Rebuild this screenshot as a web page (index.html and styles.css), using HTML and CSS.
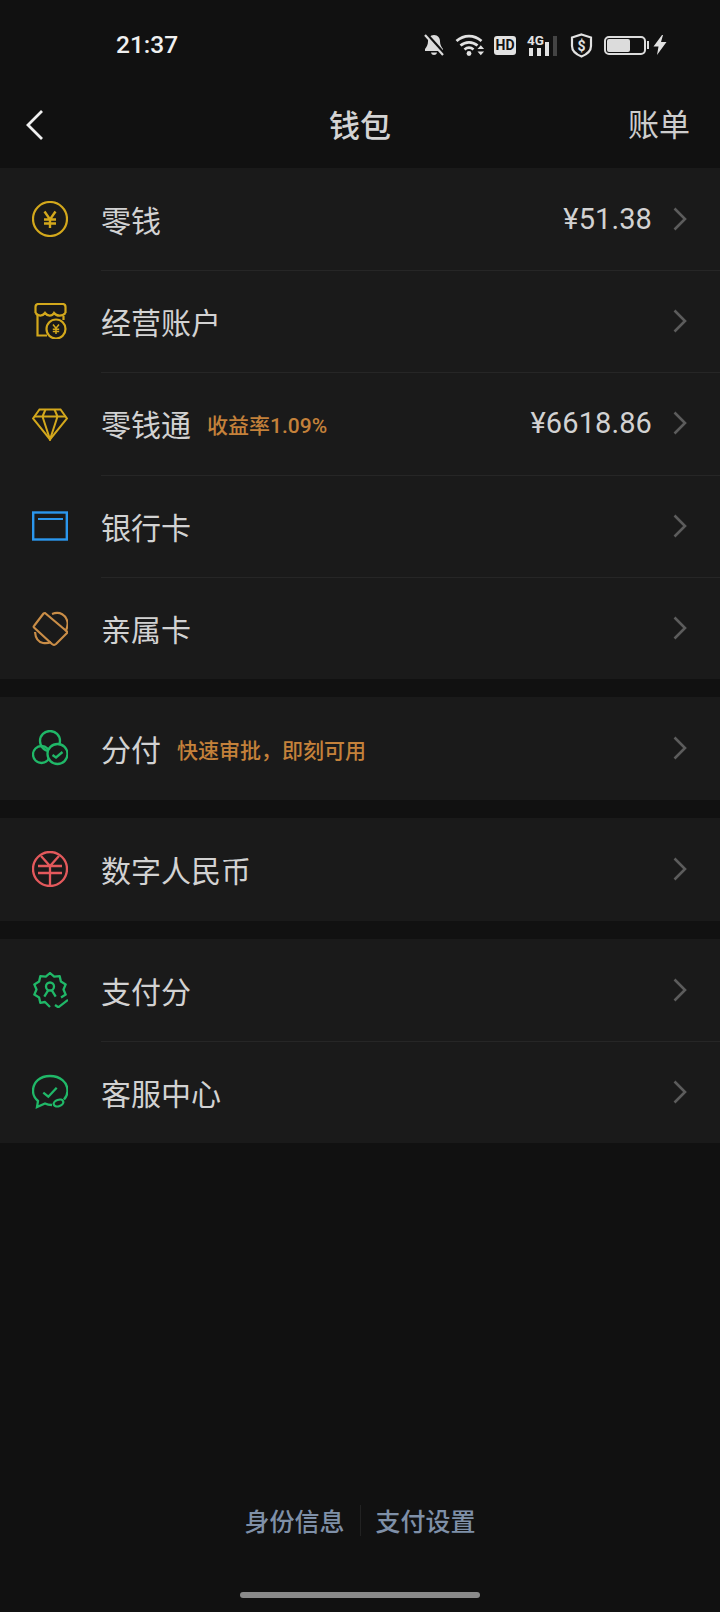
FILE: index.html
```html
<!DOCTYPE html>
<html lang="zh">
<head>
<meta charset="utf-8">
<title>钱包</title>
<link rel="stylesheet" href="styles.css">
</head>
<body>
<div class="page">
  <div class="status">
    <span class="time">21:37</span>
    <div class="status-icons">
      <svg class="si" width="20" height="22" viewBox="0 0 20 22"><path d="M10 1c-4 0-6 3-6 6.500 0 3.500-1.500 5.500-3 7.500v2h18v-2c-1.500-2-3-4-3-7.500C16 4 14 1 10 1z" fill="#dcdcdc"/><path d="M7 18.500h6c-.5 1.800-1.500 2.500-3 2.500s-2.500-.7-3-2.500z" fill="#dcdcdc"/><path d="M2.500 0l18 20" stroke="#111" stroke-width="3"/><path d="M1 1l18 20" stroke="#dcdcdc" stroke-width="2.200"/></svg>
      <svg class="si s-wifi" width="30" height="22" viewBox="0 0 30 22" fill="none" stroke="#e2e2e2" stroke-width="2.800"><path d="M1.500 7C9 .5 19 .5 26.500 7"/><path d="M5.500 11.500c5-4.300 12-4.300 17 0"/><path d="M9.500 15.500c2.800-2.300 6.200-2.300 9 0"/><circle cx="14" cy="19.500" r="2.400" fill="#e2e2e2" stroke="none"/><path d="M22.500 15l3.300-3.800 3.300 3.800zM22.500 17.500l3.300 3.800 3.300-3.800z" fill="#e2e2e2" stroke="none"/></svg>
      <span class="hd">HD</span>
      <div class="net">
        <span class="net-label">4G</span>
        <i class="bar b1"></i><i class="bar b2"></i><i class="bar b3"></i><i class="bar b4"></i>
      </div>
      <svg class="si s-shield" width="23" height="25" viewBox="0 0 23 25" fill="none"><path d="M11.500 1.500l9.500 3v8.500c0 5-4.500 8.500-9.500 10.500-5-2-9.500-5.500-9.500-10.500V4.500z" stroke="#e2e2e2" stroke-width="2.200"/><text x="11.500" y="17.500" class="shield-s">$</text></svg>
      <div class="battery"><div class="battery-fill"></div></div>
      <i class="battery-cap"></i>
      <svg class="si s-bolt" width="14" height="20" viewBox="0 0 14 20"><path d="M9 0L.5 11.500h5L4 20l9.500-13H8l2-7z" fill="#e2e2e2"/></svg>
    </div>
  </div>

  <header class="nav">
    <svg class="back" width="20" height="32" viewBox="0 0 20 32" fill="none"><path d="M17 2L3 16l14 14" stroke="#f0f0f0" stroke-width="2.800"/></svg>
    <h1 class="title">钱包</h1>
    <span class="bill">账单</span>
  </header>

  <section class="group">
    <div class="row">
      <svg class="icon" viewBox="0 0 36 36" fill="none" stroke="#d3a81c" stroke-width="2.200"><circle cx="18" cy="18" r="17"/><path d="M12.500 10.500l5.500 8 5.500-8M18 18.500V27M12 18.500h12M12 22.500h12" stroke-width="2.400"/></svg>
      <div class="row-main"><span class="label">零钱</span><span class="amount">¥51.38</span>
      <svg class="chev" viewBox="0 0 14 24" fill="none"><path d="M1.500 1.500L12 12 1.500 22.500"/></svg></div>
    </div>
    <div class="row">
      <svg class="icon" viewBox="0 0 36 36" fill="none" stroke="#d3a81c" stroke-width="2.200"><path d="M3.500 10V4Q3.500 1 6.500 1h24q3 0 3 3v6"/><path d="M3.500 10c2.500 3.500 7 3.500 9.500 0 2.500 3.500 7 3.500 9 0 2.500 3.500 8.500 3.500 11.500 0"/><path d="M5.500 11v21.500H15M31.500 13v4"/><circle cx="24" cy="26" r="9.500" fill="#1a1a1a"/><path d="M21 21.500l3 3.700 3-3.700M24 25.200V31M20.800 26.300h6.400M20.800 28.500h6.400" stroke-width="1.500"/></svg>
      <div class="row-main"><span class="label">经营账户</span>
      <svg class="chev" viewBox="0 0 14 24" fill="none"><path d="M1.500 1.500L12 12 1.500 22.500"/></svg></div>
    </div>
    <div class="row">
      <svg class="icon" viewBox="0 0 36 36" fill="none" stroke="#d3a81c" stroke-width="2"><path d="M7.500 4.500h21l6.500 9L18 34.500 1 13.500z"/><path d="M2 11.500h32M10.500 11.500L18 34.500l7.500-23M10.500 11.500l3-7M25.500 11.500l-3-7"/></svg>
      <div class="row-main"><span class="label">零钱通</span><span class="tag t1">收益率1.09%</span><span class="amount">¥6618.86</span>
      <svg class="chev" viewBox="0 0 14 24" fill="none"><path d="M1.500 1.500L12 12 1.500 22.500"/></svg></div>
    </div>
    <div class="row">
      <svg class="icon" viewBox="0 0 36 36" fill="none" stroke="#2b97ee"><rect x="1.200" y="4.500" width="33.600" height="27" stroke-width="2.400"/><path d="M6 11h25" stroke-width="2"/></svg>
      <div class="row-main"><span class="label">银行卡</span>
      <svg class="chev" viewBox="0 0 14 24" fill="none"><path d="M1.500 1.500L12 12 1.500 22.500"/></svg></div>
    </div>
    <div class="row">
      <svg class="icon" viewBox="0 0 36 36" fill="none" stroke="#c98d47" stroke-width="2.200"><path d="M13 3l22 18.500c.5 .5 .5 1 0 1.500L24 34c-1.500 1.300-2.500 1.300-4 0L2 17.500c-.5-.5-.5-1 0-1.500L11.500 3.500c.5-.5 1-.5 1.500-.5z"/><path d="M20 4c8-3 14 1 15.500 8 .5 3-.5 6.500-2 9.500M3 22c.5 6 3 10 8 11 3 .5 6 0 8-1"/></svg>
      <div class="row-main"><span class="label">亲属卡</span>
      <svg class="chev" viewBox="0 0 14 24" fill="none"><path d="M1.500 1.500L12 12 1.500 22.500"/></svg></div>
    </div>
  </section>

  <section class="group">
    <div class="row solo">
      <svg class="icon" viewBox="0 0 36 36" fill="none" stroke="#20b868" stroke-width="2.300"><circle cx="18" cy="11" r="10"/><circle cx="9.500" cy="24.500" r="8.500"/><circle cx="25.500" cy="24" r="10" fill="#1a1a1a"/><path d="M20.500 25l3.500 2.500 6.500-5.500"/></svg>
      <div class="row-main"><span class="label">分付</span><span class="tag t2">快速审批，即刻可用</span>
      <svg class="chev" viewBox="0 0 14 24" fill="none"><path d="M1.500 1.500L12 12 1.500 22.500"/></svg></div>
    </div>
  </section>

  <section class="group">
    <div class="row solo">
      <svg class="icon" viewBox="0 0 36 36" fill="none" stroke="#e3595c" stroke-width="2.300"><circle cx="18" cy="18" r="17"/><path d="M9 5L18 15 27 5M18 15V35M6 15h24M6 22h24"/></svg>
      <div class="row-main"><span class="label">数字人民币</span>
      <svg class="chev" viewBox="0 0 14 24" fill="none"><path d="M1.500 1.500L12 12 1.500 22.500"/></svg></div>
    </div>
  </section>

  <section class="group">
    <div class="row">
      <svg class="icon" viewBox="0 0 36 36" fill="none" stroke="#20b868" stroke-width="2.300" stroke-linejoin="round"><path d="M29 25.400l4.700-2.800-2.200-5.100 2.200-5.100-4.800-2.800-1.200-5.450-5.500 .55L18 1l-4.200 3.700-5.500-.55L7.100 9.600l-4.800 2.800 2.200 5.100-2.200 5.100 4.800 2.800 1.200 5.450 4.700-.85L18 35"/><circle cx="18" cy="14.500" r="4"/><path d="M12.300 24.700l4-6.500M23.700 24.700l-4-6.500M23 33l3.300 2.300 9.700-7.500"/></svg>
      <div class="row-main"><span class="label">支付分</span>
      <svg class="chev" viewBox="0 0 14 24" fill="none"><path d="M1.500 1.500L12 12 1.500 22.500"/></svg></div>
    </div>
    <div class="row">
      <svg class="icon" viewBox="0 0 36 36" fill="none" stroke="#20b868" stroke-width="2.300"><path d="M32 25.500c2.500-3 3.500-5.500 3.500-8.500C35.500 8 28 2 18 2S1 8 1 17c0 4 2 7.500 5 10l-1 6 8-3.500c2 1 4 1.500 7 1.500"/><path d="M11.300 18.700l5 4 8.400-9"/><ellipse cx="26.500" cy="29" rx="5" ry="3.200" transform="rotate(-20 26.500 29)"/></svg>
      <div class="row-main"><span class="label">客服中心</span>
      <svg class="chev" viewBox="0 0 14 24" fill="none"><path d="M1.500 1.500L12 12 1.500 22.500"/></svg></div>
    </div>
  </section>

  <footer class="foot">
    <div class="links">
      <span class="link">身份信息</span>
      <i class="divider"></i>
      <span class="link">支付设置</span>
    </div>
    <div class="home"></div>
  </footer>
</div>
</body>
</html>
```

FILE: styles.css
```css
* { box-sizing: border-box; }
html, body { margin: 0; padding: 0; background: #111; }
body { font-family: "Noto Sans CJK SC", "Noto Sans", sans-serif; color: #d2d2d2; }
.page { width: 720px; height: 1612px; display: flex; flex-direction: column; background: #111; overflow: hidden; }

.status { height: 90px; flex: none; display: flex; align-items: center; padding: 0 53px 0 116px; justify-content: space-between; }
.time { font: 500 24.500px/1 Roboto, sans-serif; color: #f0f0f0; }
.status-icons { display: flex; align-items: center; }
.si { display: block; flex: none; }
.s-wifi { margin-left: 11px; }
.hd { margin-left: 9px; width: 22px; height: 19px; border-radius: 3px; background: #e2e2e2; color: #111; font: 700 14px/19px Roboto, sans-serif; text-align: center; }
.net { position: relative; margin-left: 13px; width: 29px; height: 20px; margin-top: 1px; display: flex; align-items: flex-end; gap: 4px; }
.net-label { position: absolute; left: -2px; top: -2px; font: 700 13.500px/12px Roboto, sans-serif; color: #e2e2e2; }
.bar { display: block; width: 4px; background: #e2e2e2; }
.b1 { height: 8px; }
.b2 { height: 8px; }
.b3 { height: 14px; }
.b4 { height: 20px; background: #444; }
.s-shield { margin-left: 12px; }
.shield-s { font: 700 14px Roboto, sans-serif; fill: #e2e2e2; text-anchor: middle; }
.battery { margin-left: 11px; width: 42px; height: 19px; border: 2px solid #dcdcdc; border-radius: 5px; padding: 1px; }
.battery-fill { width: 23px; height: 100%; background: #dcdcdc; border-radius: 2px; }
.battery-cap { display: block; width: 2px; height: 8px; margin-left: 1px; background: #dcdcdc; }
.s-bolt { margin-left: 4px; }

.nav { height: 78px; flex: none; display: flex; align-items: center; justify-content: space-between; padding: 0 30px 8px 25px; position: relative; }
.back { display: block; }
.title { position: absolute; left: 0; right: 0; top: 18px; margin: 0; text-align: center; font-size: 31px; line-height: 32px; font-weight: 500; color: #d4d4d4; }
.bill { font-size: 31px; line-height: 32px; color: #cdcdcd; margin-top: -4px; }

.group { background: #1a1a1a; margin-bottom: 18px; flex: none; }
.row { height: 102.200px; display: flex; align-items: center; padding-left: 32px; }
.row.solo { height: 103px; }
.icon { width: 36px; height: 36px; flex: none; margin-right: 33px; }
.row-main { flex: 1; align-self: flex-start; height: calc(100% + 1px); display: flex; align-items: center; border-bottom: 1px solid #262626; padding-right: 33px; }
.row:last-child .row-main { height: 100%; border-bottom: 0; }
.label { font-size: 30px; line-height: 40px; color: #d2d2d2; }
.tag { font-family: Roboto, "Noto Sans CJK SC", sans-serif; font-size: 21px; line-height: 28px; font-weight: 500; color: #c4813a; margin-top: 5px; }
.t1 { margin-left: 16px; }
.t2 { margin-left: 16px; }
.amount { margin-left: auto; font: 400 29px/40px Roboto, sans-serif; letter-spacing: .1px; color: #d2d2d2; }
.chev { width: 14px; height: 24px; flex: none; margin-left: 21px; stroke: #5c5c5c; stroke-width: 2.600; }
.label + .chev, .tag + .chev { margin-left: auto; }

.foot { margin-top: auto; display: flex; flex-direction: column; align-items: center; padding-bottom: 14px; }
.links { display: flex; align-items: center; gap: 15px; }
.link { font-size: 25px; line-height: 34px; font-weight: 500; color: #7f90a8; }
.divider { display: block; width: 1px; height: 31px; background: #222; }
.home { margin-top: 55px; width: 240px; height: 6px; border-radius: 3px; background: #8a8a8a; }
```
